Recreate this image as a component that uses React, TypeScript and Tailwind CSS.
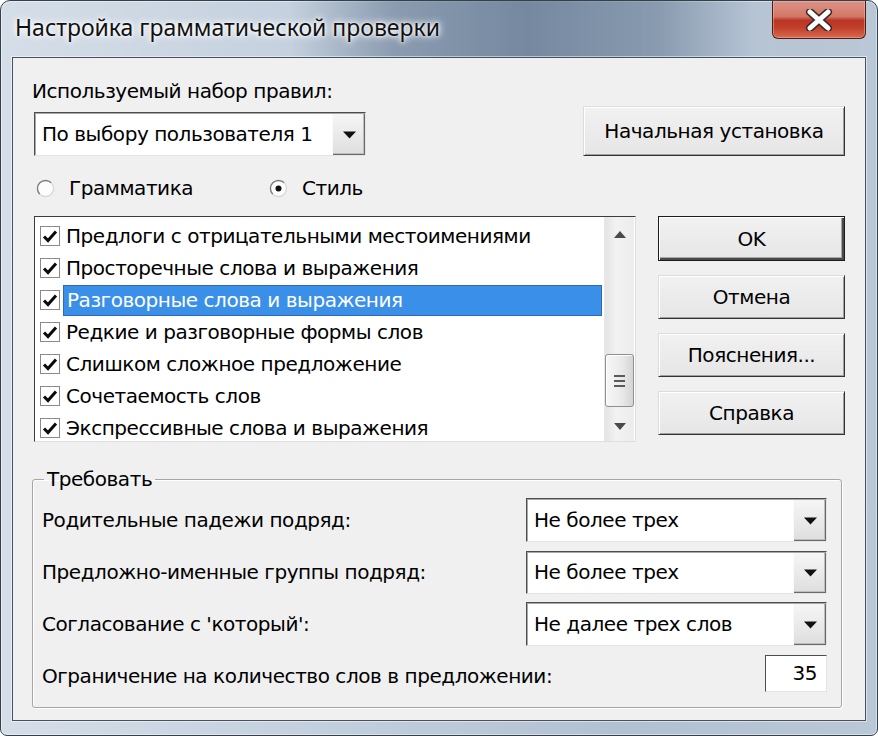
import React from "react";

const items = [
  "Предлоги с отрицательными местоимениями",
  "Просторечные слова и выражения",
  "Разговорные слова и выражения",
  "Редкие и разговорные формы слов",
  "Слишком сложное предложение",
  "Сочетаемость слов",
  "Экспрессивные слова и выражения",
];

function Arrow() {
  return (
    <svg width="13" height="8" viewBox="0 0 13 8">
      <path d="M0 0.5H13L6.5 7.5Z" fill="#111" />
    </svg>
  );
}

function Combo({ text, className }: { text: string; className: string }) {
  return (
    <div
      className={
        "flex bg-white border border-t-[#4d4d4d] border-l-[#4d4d4d] border-r-[#e4e4e4] border-b-[#e4e4e4] shadow-[inset_1px_1px_0_#a8a8a8] " +
        className
      }
    >
      <div className="flex-1 flex items-center pl-[7px] whitespace-nowrap">{text}</div>
      <div className="w-[33px] mt-[1px] flex items-center justify-center bg-[linear-gradient(#f6f6f6,#dedede)] border-l border-l-[#fafafa] shadow-[inset_-1px_-1px_0_#6a6a6a,inset_-2px_-2px_0_#bdbdbd]">
        <Arrow />
      </div>
    </div>
  );
}

function Btn({
  children,
  def,
  className,
}: {
  children: React.ReactNode;
  def?: boolean;
  className: string;
}) {
  return (
    <div
      className={
        "flex items-center justify-center bg-[linear-gradient(#f1f1f1,#e6e6e6)] whitespace-nowrap " +
        (def
          ? "border border-[#1c1c1c] shadow-[inset_1px_1px_0_#ffffff,inset_-2px_-2px_0_#4a4a4a,inset_-3px_-3px_0_#a6a6a6] "
          : "border border-t-[#dcdcdc] border-l-[#dcdcdc] border-r-[#333333] border-b-[#333333] shadow-[inset_1px_1px_0_#ffffff,inset_-1px_-1px_0_#a0a0a0] ") +
        className
      }
    >
      {children}
    </div>
  );
}

function Radio({ checked }: { checked?: boolean }) {
  return (
    <svg width="19" height="19" viewBox="0 0 19 19">
      <circle cx="9.5" cy="9.5" r="8" fill="#fdfdfd" />
      <path d="M3.8 15.2 A8 8 0 0 1 15.2 3.8" fill="none" stroke="#7c7c7c" strokeWidth="1.4" />
      <path d="M15.2 3.8 A8 8 0 0 1 3.8 15.2" fill="none" stroke="#dadada" strokeWidth="1.4" />
      {checked && <circle cx="9.5" cy="9.5" r="3" fill="#111" />}
    </svg>
  );
}

function Check() {
  return (
    <div className="w-[20px] h-[20px] border border-[#8a8a8a] bg-white flex items-center justify-center shrink-0">
      <svg width="16" height="14" viewBox="0 0 16 14">
        <path d="M2 7.5 L6 11.5 L14 2.5" fill="none" stroke="#0a0a0a" strokeWidth="3" />
      </svg>
    </div>
  );
}

export default function App() {
  return (
    <div className="w-[878px] h-[736px] bg-white font-['DejaVu_Sans',sans-serif] text-[20px] leading-[24px] tracking-[-0.45px] text-black">
      <div className="w-full h-full rounded-t-[10px] rounded-b-[7px] border border-[#34404c] flex flex-col overflow-hidden shadow-[inset_0_0_0_1px_rgba(255,255,255,0.45)] bg-[linear-gradient(to_right,#d5dee8_0%,#c6d2df_30%,#b2c1d2_70%,#b9c7d6_100%)]">
        {/* title bar */}
        <div className="h-[56px] flex items-start justify-between bg-[linear-gradient(to_right,rgba(96,116,142,0)_0%,rgba(96,116,142,0)_33%,rgba(96,116,142,0.55)_45%,rgba(96,116,142,0.75)_60%,rgba(96,116,142,0.5)_75%,rgba(96,116,142,0)_86%)]">
          <div className="pl-[14px] pt-[11px] font-['Noto_Sans',sans-serif] tracking-normal text-[23px] leading-[30px] text-[#111] [text-shadow:0_0_10px_#ffffff,0_0_6px_#ffffff,0_0_3px_#ffffff]">
            Настройка грамматической проверки
          </div>
          <div className="mr-[11px] w-[94px] h-[38px] rounded-b-[6px] border border-t-0 border-[#4a1f18] flex items-center justify-center shadow-[inset_0_0_0_1px_rgba(255,190,175,0.45)] bg-[linear-gradient(to_bottom,#dc9385_0%,#d27767_42%,#bb3524_52%,#c03f2b_72%,#d9694f_100%)]">
            <svg width="28" height="22" viewBox="0 0 28 22">
              <path d="M5 3 L23 19 M23 3 L5 19" stroke="#3a2a28" strokeWidth="8" strokeLinecap="round" />
              <path d="M5 3 L23 19 M23 3 L5 19" stroke="#ffffff" strokeWidth="5" strokeLinecap="round" />
            </svg>
          </div>
        </div>

        {/* client area */}
        <div className="flex-1 mx-[11px] mb-[14px] border border-[#46515d] bg-[#f0f0f0] pl-[21px] pr-[20px] pt-[21px] flex flex-col shadow-[0_0_0_1px_rgba(255,255,255,0.5)]">
          <div className="-ml-[2px]">Используемый набор правил:</div>

          <div className="mt-[3px] flex items-end justify-between">
            <Combo text="По выбору пользователя 1" className="w-[332px] h-[44px]" />
            <Btn className="w-[262px] h-[50px]">Начальная установка</Btn>
          </div>

          <div className="mt-[20px] flex items-center">
            <div className="w-[233px] ml-[2px] flex items-center">
              <Radio />
              <span className="ml-[14px]">Грамматика</span>
            </div>
            <div className="flex items-center">
              <Radio checked />
              <span className="ml-[14px]">Стиль</span>
            </div>
          </div>

          <div className="mt-[16px] flex justify-between">
            <div className="w-[602px] h-[226px] bg-white border border-t-[#3c3c3c] border-l-[#3c3c3c] border-r-[#dedede] border-b-[#dedede] flex">
              <div className="flex-1 pt-[3px] pl-[5px] overflow-hidden">
                {items.map((t, i) => (
                  <div key={t} className="h-[32px] flex items-center">
                    <Check />
                    <div
                      className={
                        "ml-[3px] h-[31px] flex items-center pl-[3px] whitespace-nowrap " +
                        (i === 2
                          ? "flex-1 mr-[2px] bg-[#3a8fe8] border border-[#2b6cb5] text-white"
                          : "")
                      }
                    >
                      {t}
                    </div>
                  </div>
                ))}
              </div>
              <div className="w-[30px] mr-[1px] flex flex-col bg-[linear-gradient(to_right,#e4e4e4,#f2f2f2_40%,#ececec)] border-l border-[#e8e8e8]">
                <div className="h-[34px] flex items-center justify-center">
                  <svg width="12" height="7" viewBox="0 0 12 7">
                    <path d="M0 7L6 0L12 7Z" fill="#4a4a4a" />
                  </svg>
                </div>
                <div className="flex-1">
                  <div className="mt-[103px] h-[53px] rounded-[3px] border border-[#8f8f8f] bg-[linear-gradient(to_right,#f7f7f7,#e9e9e9_60%,#d4d4d4)] flex flex-col items-center justify-center gap-[3px] shadow-[inset_1px_1px_0_#ffffff]">
                    <div className="w-[11px] h-[2px] bg-[#5a5a5a]" />
                    <div className="w-[11px] h-[2px] bg-[#5a5a5a]" />
                    <div className="w-[11px] h-[2px] bg-[#5a5a5a]" />
                  </div>
                </div>
                <div className="h-[30px] flex items-center justify-center">
                  <svg width="12" height="7" viewBox="0 0 12 7">
                    <path d="M0 0L6 7L12 0Z" fill="#4a4a4a" />
                  </svg>
                </div>
              </div>
            </div>

            <div className="w-[187px] flex flex-col gap-[14px]">
              <Btn def className="h-[45px]">OK</Btn>
              <Btn className="h-[44px]">Отмена</Btn>
              <Btn className="h-[44px]">Пояснения...</Btn>
              <Btn className="h-[44px]">Справка</Btn>
            </div>
          </div>

          <fieldset className="mt-[25px] -ml-[2px] w-[810px] h-[241px] border border-[#a6a6a6] rounded-[3px] shadow-[inset_1px_1px_0_#ffffff,1px_1px_0_#ffffff] pl-[9px] pr-[14px] pt-[3px] pb-[4px] flex flex-col">
            <legend className="ml-[2px] px-[3px]">Требовать</legend>
            <div className="h-[52px] flex items-center justify-between">
              <span>Родительные падежи подряд:</span>
              <Combo text="Не более трех" className="w-[301px] h-[44px]" />
            </div>
            <div className="h-[52px] flex items-center justify-between">
              <span>Предложно-именные группы подряд:</span>
              <Combo text="Не более трех" className="w-[301px] h-[43px]" />
            </div>
            <div className="h-[52px] flex items-center justify-between">
              <span>Согласование с 'который':</span>
              <Combo text="Не далее трех слов" className="w-[301px] h-[44px]" />
            </div>
            <div className="h-[52px] flex items-center justify-between">
              <span>Ограничение на количество слов в предложении:</span>
              <div className="w-[62px] h-[37px] mb-[6px] bg-white border border-t-[#4d4d4d] border-l-[#4d4d4d] border-r-[#e4e4e4] border-b-[#e4e4e4] flex items-center justify-end pr-[9px]">
                35
              </div>
            </div>
          </fieldset>
        </div>
      </div>
    </div>
  );
}
